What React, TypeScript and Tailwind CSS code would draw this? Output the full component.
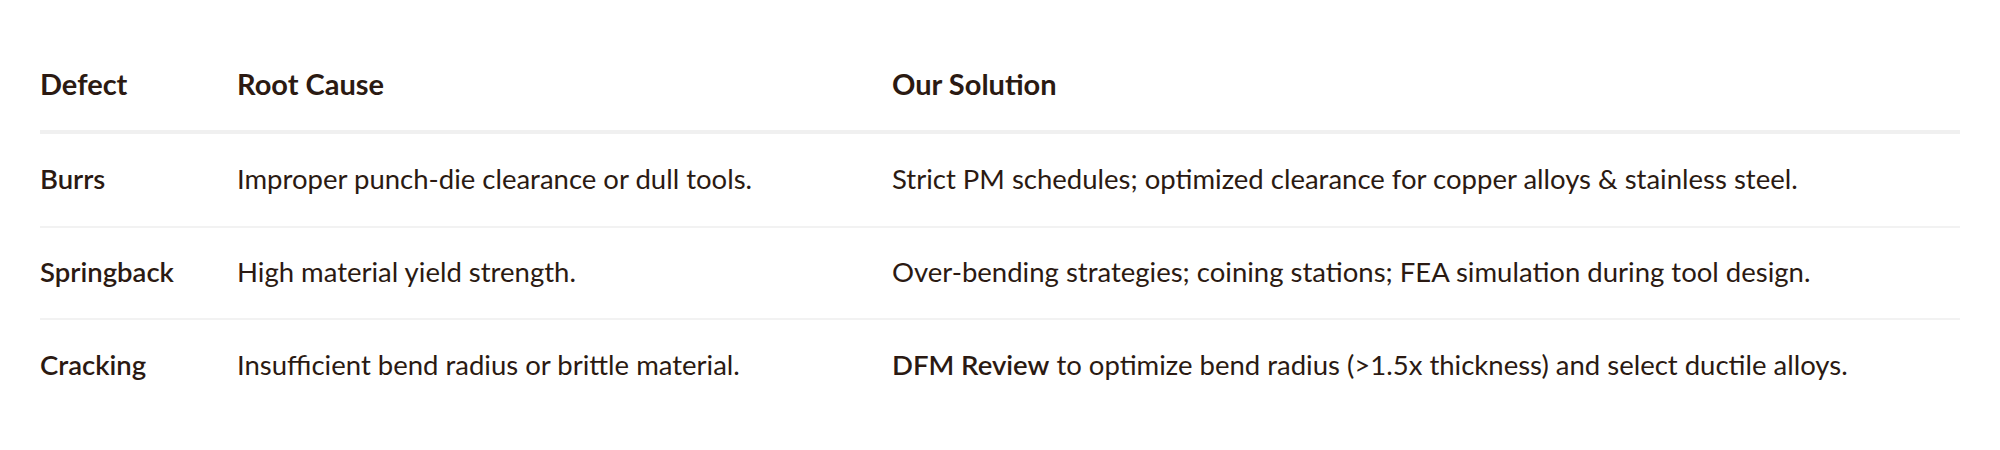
import React from "react";

const rows = [
  {
    defect: "Burrs",
    cause: "Improper punch-die clearance or dull tools.",
    solution: <>Strict PM schedules; optimized clearance for copper alloys &amp; stainless steel.</>,
    h: "h-[94px] border-b-2 border-[#f2f2f2]",
  },
  {
    defect: "Springback",
    cause: "High material yield strength.",
    solution: <>Over-bending strategies; coining stations; FEA simulation during tool design.</>,
    h: "h-[92px] border-b-2 border-[#f2f2f2]",
  },
  {
    defect: "Cracking",
    cause: "Insufficient bend radius or brittle material.",
    solution: (
      <>
        <span className="font-semibold">DFM Review</span> to optimize bend radius (&gt;1.5x thickness) and select ductile alloys.
      </>
    ),
    h: "h-[92px]",
  },
];

export default function App() {
  return (
    <div
      className="w-[2000px] h-[450px] bg-white px-10 pt-[42px] text-[#2b1a12]"
      style={{ fontFamily: "Lato, 'Open Sans', sans-serif" }}
    >
      <div className="grid grid-cols-[197px_655px_1fr] h-[92px] pb-[5px] items-center border-b-4 border-[#f0f0f0] text-[29px] font-bold">
        <div>Defect</div>
        <div>Root Cause</div>
        <div>Our Solution</div>
      </div>
      {rows.map((r) => (
        <div key={r.defect} className={`grid grid-cols-[197px_655px_1fr] items-center pb-[2px] text-[27.5px] ${r.h}`}>
          <div className="font-semibold">{r.defect}</div>
          <div>{r.cause}</div>
          <div>{r.solution}</div>
        </div>
      ))}
    </div>
  );
}
